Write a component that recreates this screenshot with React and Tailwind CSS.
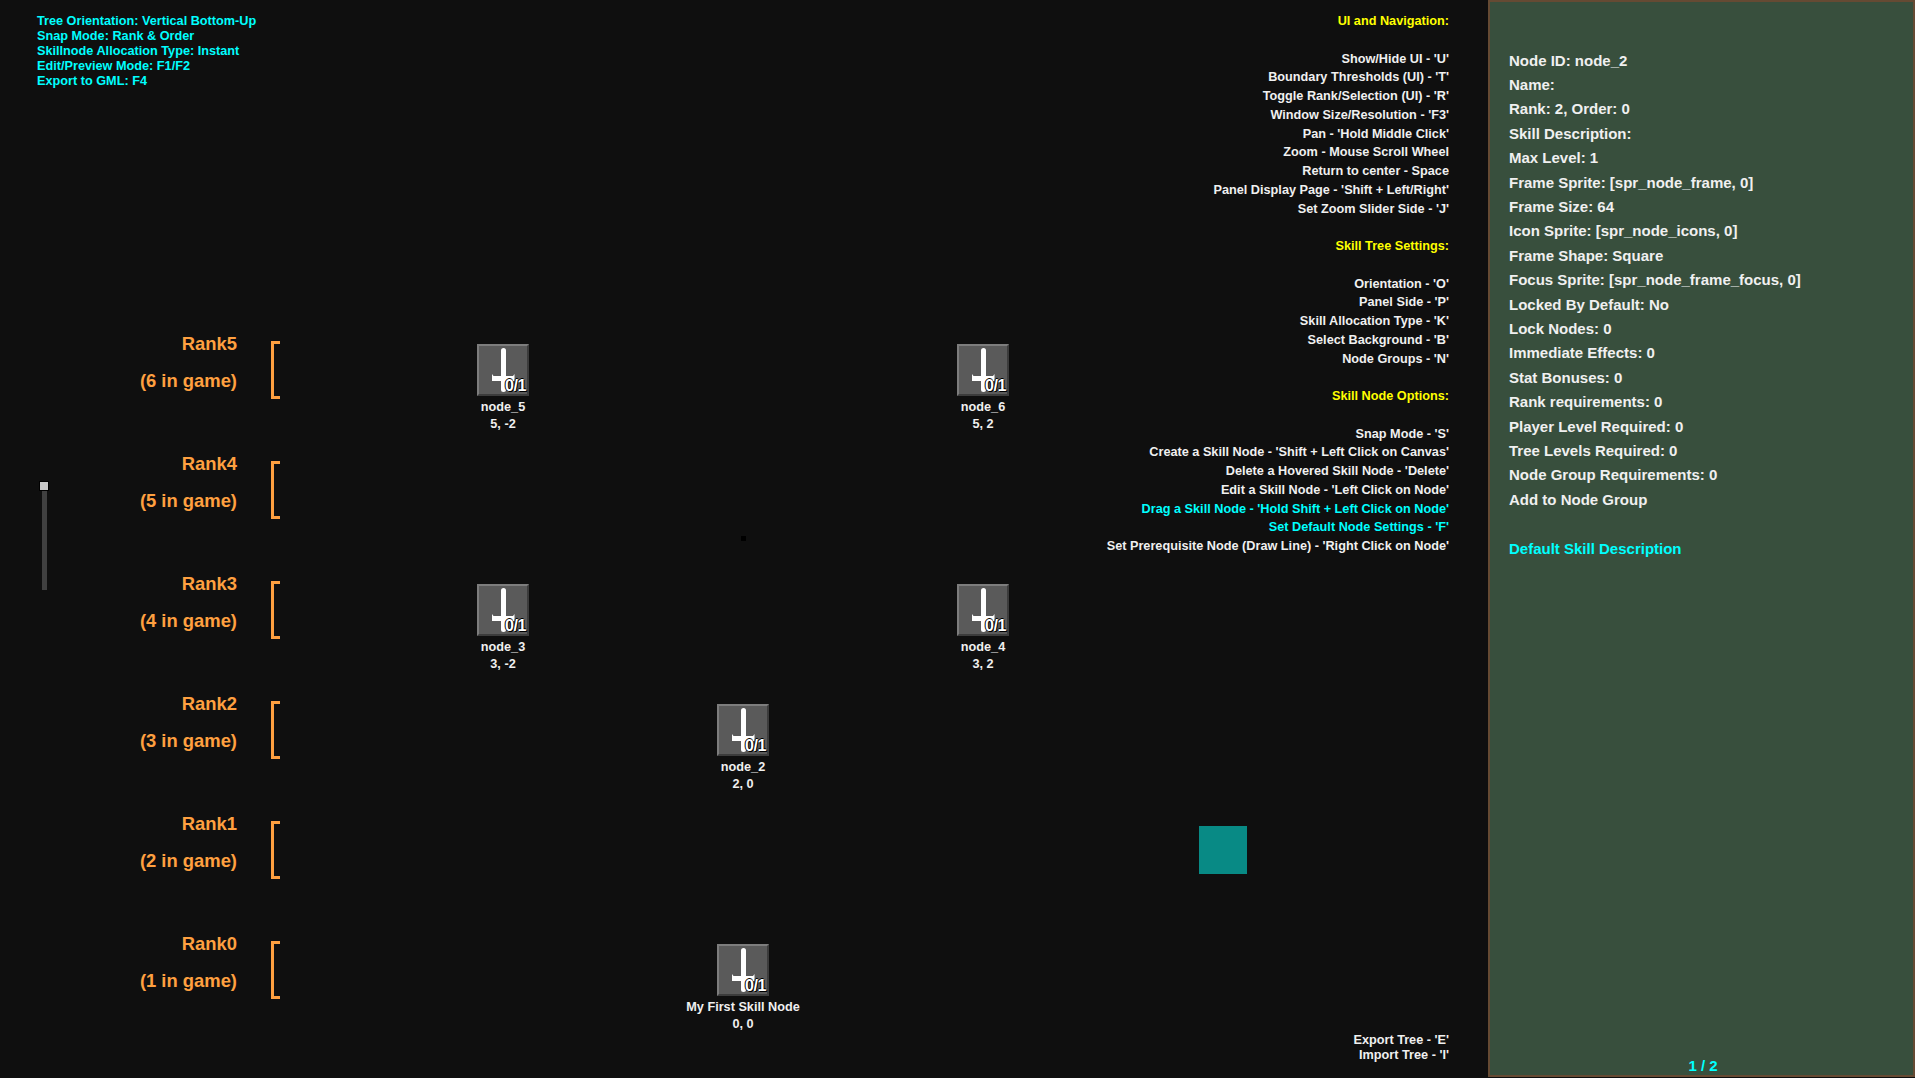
const statusLines = [
  "Tree Orientation: Vertical Bottom-Up",
  "Snap Mode: Rank & Order",
  "Skillnode Allocation Type: Instant",
  "Edit/Preview Mode: F1/F2",
  "Export to GML: F4",
];

// null = blank line, y = section heading, c = cyan
const helpLines = [
  { t: "UI and Navigation:", k: "y" },
  null,
  { t: "Show/Hide UI - 'U'" },
  { t: "Boundary Thresholds (UI) - 'T'" },
  { t: "Toggle Rank/Selection (UI) - 'R'" },
  { t: "Window Size/Resolution - 'F3'" },
  { t: "Pan - 'Hold Middle Click'" },
  { t: "Zoom - Mouse Scroll Wheel" },
  { t: "Return to center - Space" },
  { t: "Panel Display Page - 'Shift + Left/Right'" },
  { t: "Set Zoom Slider Side - 'J'" },
  null,
  { t: "Skill Tree Settings:", k: "y" },
  null,
  { t: "Orientation - 'O'" },
  { t: "Panel Side - 'P'" },
  { t: "Skill Allocation Type - 'K'" },
  { t: "Select Background - 'B'" },
  { t: "Node Groups - 'N'" },
  null,
  { t: "Skill Node Options:", k: "y" },
  null,
  { t: "Snap Mode - 'S'" },
  { t: "Create a Skill Node - 'Shift + Left Click on Canvas'" },
  { t: "Delete a Hovered Skill Node - 'Delete'" },
  { t: "Edit a Skill Node - 'Left Click on Node'" },
  { t: "Drag a Skill Node - 'Hold Shift + Left Click on Node'", k: "c" },
  { t: "Set Default Node Settings - 'F'", k: "c" },
  { t: "Set Prerequisite Node (Draw Line) - 'Right Click on Node'" },
];

const panelLines = [
  "Node ID: node_2",
  "Name:",
  "Rank: 2, Order: 0",
  "Skill Description:",
  "Max Level: 1",
  "Frame Sprite: [spr_node_frame, 0]",
  "Frame Size: 64",
  "Icon Sprite: [spr_node_icons, 0]",
  "Frame Shape: Square",
  "Focus Sprite: [spr_node_frame_focus, 0]",
  "Locked By Default: No",
  "Lock Nodes: 0",
  "Immediate Effects: 0",
  "Stat Bonuses: 0",
  "Rank requirements: 0",
  "Player Level Required: 0",
  "Tree Levels Required: 0",
  "Node Group Requirements: 0",
  "Add to Node Group",
];

const ranks = [
  { name: "Rank5", count: "(6 in game)" },
  { name: "Rank4", count: "(5 in game)" },
  { name: "Rank3", count: "(4 in game)" },
  { name: "Rank2", count: "(3 in game)" },
  { name: "Rank1", count: "(2 in game)" },
  { name: "Rank0", count: "(1 in game)" },
];

const nodes = [
  { label: "node_5", pos: "5, -2", x: 503, y: 344 },
  { label: "node_6", pos: "5, 2", x: 983, y: 344 },
  { label: "node_3", pos: "3, -2", x: 503, y: 584 },
  { label: "node_4", pos: "3, 2", x: 983, y: 584 },
  { label: "node_2", pos: "2, 0", x: 743, y: 704 },
  { label: "My First Skill Node", pos: "0, 0", x: 743, y: 944 },
];

const RankRow = ({ rank }) => (
  <div className="h-[120px] flex justify-end gap-[34px] text-[18.4px] text-[#ffa040]">
    <div className="pt-[10px] flex flex-col items-end gap-[9px] leading-[28px] whitespace-nowrap">
      <div>{rank.name}</div>
      <div>{rank.count}</div>
    </div>
    <div className="mt-[21px] w-[9px] h-[58px] border-l-[3px] border-y-[3px] border-[#ffa040]" />
  </div>
);

const SkillNode = ({ node }) => (
  <div className="absolute w-[200px] -ml-[100px] flex flex-col items-center" style={{ left: node.x, top: node.y }}>
    <div className="relative w-[52px] h-[52px] bg-[#5a5a5a] border-[2px] border-t-[#7d7d7d] border-l-[#7d7d7d] border-r-[#3c3c3c] border-b-[#3c3c3c]">
      <svg className="absolute left-0 top-0" width="48" height="48" viewBox="0 0 48 48">
        <rect x="22" y="2" width="5" height="44" rx="2.5" fill="#ffffff" />
        <path d="M13 28 L14.5 30 L34 30 L35.5 28 L35.5 35 L13 35 Z" fill="#ffffff" />
      </svg>
      <span className="absolute right-[1px] bottom-[-1px] text-[16px] leading-[18px] tracking-[-0.4px] text-white [text-shadow:1px_1px_0_#000,-1px_0_0_#000,0_-1px_0_#000]">0/1</span>
    </div>
    <div className="mt-[3px] text-[12.7px] leading-[17px] text-[#f0f0f0] whitespace-nowrap">{node.label}</div>
    <div className="text-[12.7px] leading-[17px] text-[#f0f0f0] whitespace-nowrap">{node.pos}</div>
  </div>
);

const App = () => {
  return (
    <div className="font-['Liberation_Sans',Arial,sans-serif] font-bold relative w-[1915px] h-[1078px] overflow-hidden bg-[#0f0f0f] flex items-start">
      {/* Canvas */}
      <div className="relative flex-1 h-full flex justify-between">
        {/* Status text and rank labels */}
        <div className="w-[280px] flex flex-col">
          <div className="pl-[37px] pt-[14px] h-[320px] text-[12.7px] leading-[15px] text-[#00ffff] whitespace-nowrap">
            {statusLines.map((line) => (
              <div key={line}>{line}</div>
            ))}
          </div>
          {ranks.map((rank) => (
            <RankRow key={rank.name} rank={rank} />
          ))}
        </div>

        {/* Help text */}
        <div className="flex flex-col justify-between pt-[12px] pb-[15px] pr-[39px] text-right text-[12.7px] text-[#f0f0f0] whitespace-nowrap">
          <div className="leading-[18.75px]">
            {helpLines.map((line, i) =>
              line ? (
                <div key={i} className={line.k === "y" ? "text-[#ffff00]" : line.k === "c" ? "text-[#00ffff]" : ""}>
                  {line.t}
                </div>
              ) : (
                <div key={i} className="h-[18.75px]" />
              )
            )}
          </div>
          <div className="leading-[15px]">
            <div>Export Tree - 'E'</div>
            <div>Import Tree - 'I'</div>
          </div>
        </div>

        {/* Zoom slider */}
        <div className="absolute left-[39px] top-[481px] flex flex-col items-start">
          <div className="w-[10px] h-[10px] bg-[#c8c8c8] border border-black" />
          <div className="ml-[3px] w-[5px] h-[99px] bg-[#404040]" />
        </div>

        {nodes.map((node) => (
          <SkillNode key={node.label} node={node} />
        ))}

        <div className="absolute left-[741px] top-[536px] w-[5px] h-[5px] bg-black" />
        <div className="absolute left-[1199px] top-[826px] w-[48px] h-[48px] bg-[#088a85]" />
      </div>

      {/* Node info panel */}
      <div className="w-[427px] h-[1077px] flex flex-col bg-[#384f3d] border-[2px] border-[#654a33] pt-[46.5px] pl-[19px] text-[15px] leading-[24.4px] text-[#f0f0f0]">
        {panelLines.map((line) => (
          <div key={line}>{line}</div>
        ))}
        <div className="mt-[24.4px] text-[#00ffff]">Default Skill Description</div>
        <div className="mt-auto pr-[16px] text-center leading-[18px] text-[#00ffff]">1 / 2</div>
      </div>
    </div>
  );
};

export default App;
